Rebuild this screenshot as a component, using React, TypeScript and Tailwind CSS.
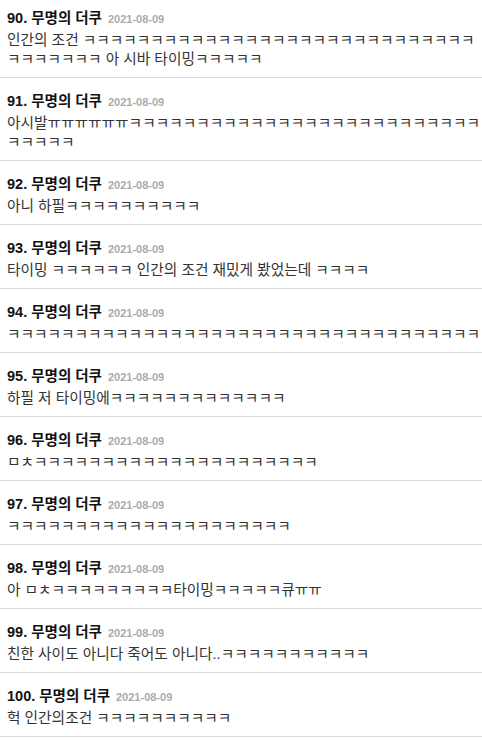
const K = (n: number) => "ㅋ".repeat(n);
const U = (n: number) => "ㅠ".repeat(n);

type Comment = { no: number; name: string; date: string; body: string };

const COMMENTS: Comment[] = [
  { no: 90, name: "무명의 더쿠", date: "2021-08-09", body: `인간의 조건 ${K(36)} 아 시바 타이밍${K(5)}` },
  { no: 91, name: "무명의 더쿠", date: "2021-08-09", body: `아시발${U(6)}${K(31)}` },
  { no: 92, name: "무명의 더쿠", date: "2021-08-09", body: `아니 하필${K(10)}` },
  { no: 93, name: "무명의 더쿠", date: "2021-08-09", body: `타이밍 ${K(6)} 인간의 조건 재밌게 봤었는데 ${K(4)}` },
  { no: 94, name: "무명의 더쿠", date: "2021-08-09", body: K(35) },
  { no: 95, name: "무명의 더쿠", date: "2021-08-09", body: `하필 저 타이밍에${K(13)}` },
  { no: 96, name: "무명의 더쿠", date: "2021-08-09", body: `ㅁㅊ${K(21)}` },
  { no: 97, name: "무명의 더쿠", date: "2021-08-09", body: K(21) },
  { no: 98, name: "무명의 더쿠", date: "2021-08-09", body: `아 ㅁㅊ${K(9)}타이밍${K(5)}큐ㅠㅠ` },
  { no: 99, name: "무명의 더쿠", date: "2021-08-09", body: `친한 사이도 아니다 죽어도 아니다..${K(11)}` },
  { no: 100, name: "무명의 더쿠", date: "2021-08-09", body: `헉 인간의조건 ${K(10)}` },
];

export default function App() {
  return (
    <div
      className="w-[482px] h-[745px] overflow-hidden bg-white"
      style={{ fontFamily: '"Liberation Sans", "Noto Sans CJK KR", sans-serif' }}
    >
      {/* ── Comment list ── */}
      <ul className="-mt-[5px]">
        {COMMENTS.map(c => (
          <li key={c.no} className="border-b border-[#dcdcdc] pl-[7px] pt-[13px] pb-[8px]">
            <div className="flex items-center h-[20px] overflow-hidden">
              <span className="text-[14.5px] leading-[20px] font-bold text-[#111]">
                {c.no}. {c.name}
              </span>
              <span className="ml-[6px] mt-[2px] text-[11px] leading-[20px] font-bold text-[#aaaaaa]">{c.date}</span>
            </div>
            <p className="mt-[3px] text-[14.7px] leading-[19px] text-[#333]">{c.body}</p>
          </li>
        ))}
      </ul>
    </div>
  );
}
